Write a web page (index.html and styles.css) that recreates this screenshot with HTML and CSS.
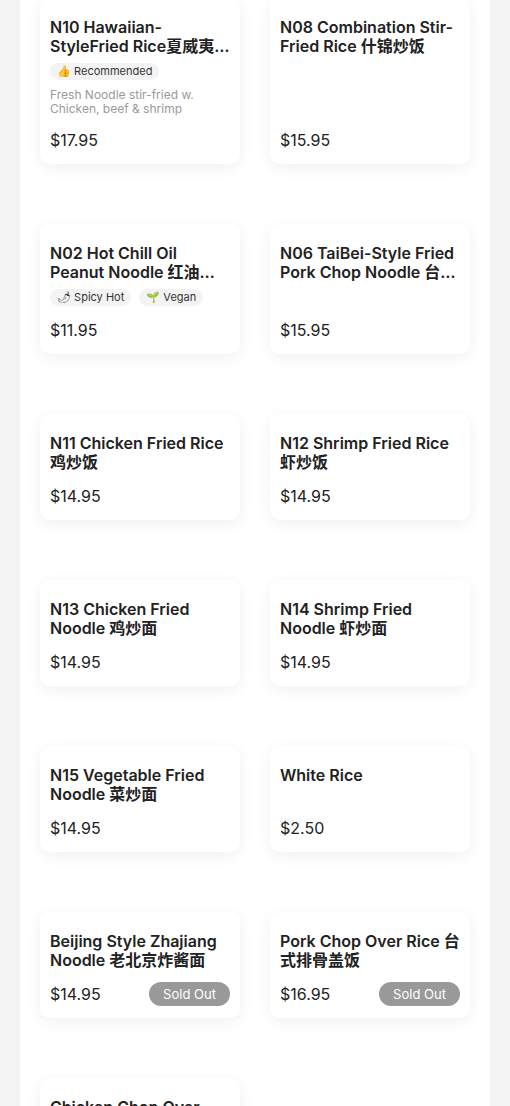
FILE: index.html
```html
<!DOCTYPE html>
<html lang="zh">

<head>
    <meta charset="UTF-8">
    <meta name="viewport" content="width=device-width, initial-scale=1.0">
    <title>Menu</title>
    <link rel="stylesheet" href="styles.css">
</head>

<body>
    <main class="page">
        <div class="menu">
            <div class="card">
                <h3 class="name">N10 Hawaiian-StyleFried Rice夏威夷炒饭</h3>
                <div class="tags">
                    <span class="tag">👍 Recommended</span>
                </div>
                <p class="desc">Fresh Noodle stir-fried w. Chicken, beef &amp; shrimp</p>
                <div class="bottom">
                    <span class="price">$17.95</span>
                </div>
            </div>
            <div class="card">
                <h3 class="name">N08 Combination Stir-Fried Rice 什锦炒饭</h3>
                <div class="bottom">
                    <span class="price">$15.95</span>
                </div>
            </div>

            <div class="card">
                <h3 class="name">N02 Hot Chill Oil Peanut Noodle 红油拌面</h3>
                <div class="tags">
                    <span class="tag">🌶 Spicy Hot</span>
                    <span class="tag">🌱 Vegan</span>
                </div>
                <div class="bottom">
                    <span class="price">$11.95</span>
                </div>
            </div>
            <div class="card">
                <h3 class="name">N06 TaiBei-Style Fried Pork Chop Noodle 台式排骨面</h3>
                <div class="bottom">
                    <span class="price">$15.95</span>
                </div>
            </div>

            <div class="card">
                <h3 class="name">N11 Chicken Fried Rice 鸡炒饭</h3>
                <div class="bottom">
                    <span class="price">$14.95</span>
                </div>
            </div>
            <div class="card">
                <h3 class="name">N12 Shrimp Fried Rice 虾炒饭</h3>
                <div class="bottom">
                    <span class="price">$14.95</span>
                </div>
            </div>

            <div class="card">
                <h3 class="name">N13 Chicken Fried Noodle 鸡炒面</h3>
                <div class="bottom">
                    <span class="price">$14.95</span>
                </div>
            </div>
            <div class="card">
                <h3 class="name">N14 Shrimp Fried Noodle 虾炒面</h3>
                <div class="bottom">
                    <span class="price">$14.95</span>
                </div>
            </div>

            <div class="card">
                <h3 class="name">N15 Vegetable Fried Noodle 菜炒面</h3>
                <div class="bottom">
                    <span class="price">$14.95</span>
                </div>
            </div>
            <div class="card">
                <h3 class="name">White Rice</h3>
                <div class="bottom">
                    <span class="price">$2.50</span>
                </div>
            </div>

            <div class="card">
                <h3 class="name">Beijing Style Zhajiang Noodle 老北京炸酱面</h3>
                <div class="bottom">
                    <span class="price">$14.95</span>
                    <span class="sold">Sold Out</span>
                </div>
            </div>
            <div class="card">
                <h3 class="name">Pork Chop Over Rice 台式排骨盖饭</h3>
                <div class="bottom">
                    <span class="price">$16.95</span>
                    <span class="sold">Sold Out</span>
                </div>
            </div>

            <div class="card">
                <h3 class="name">Chicken Chop Over Rice 台式鸡排盖饭</h3>
                <div class="bottom">
                    <span class="price">$15.95</span>
                </div>
            </div>
        </div>
    </main>
</body>

</html>
```

FILE: styles.css
```css
body {
    font-family: Inter, "Noto Sans CJK SC", sans-serif;
    background-color: #f4f4f4;
    color: #222222;
    margin: 0;
}

.page {
    width: 430px;
    min-height: 100vh;
    margin: 0 auto;
    padding: 0 20px;
    background-color: #ffffff;
}

.menu {
    display: grid;
    grid-template-columns: 200px 200px;
    column-gap: 30px;
    row-gap: 60px;
    margin-top: -2px;
}

.card {
    display: flex;
    flex-direction: column;
    background-color: #ffffff;
    border-radius: 10px;
    box-shadow: 0 4px 16px rgba(0, 0, 0, 0.06);
    padding: 20px 10px 12px;
}

.name {
    margin: 0;
    font-size: 16px;
    font-weight: 600;
    line-height: 19px;
    display: -webkit-box;
    -webkit-line-clamp: 2;
    -webkit-box-orient: vertical;
    overflow: hidden;
}

.tags {
    display: flex;
    gap: 8px;
    margin-top: 7px;
}

.tag {
    background-color: #f3f3f3;
    border-radius: 9px;
    padding: 0 7px;
    font-size: 11px;
    line-height: 17px;
    color: #333333;
}

.desc {
    margin: 8px 0 0;
    font-size: 12px;
    line-height: 14px;
    color: #9a9a9a;
}

.bottom {
    display: flex;
    justify-content: space-between;
    align-items: center;
    margin-top: auto;
    padding-top: 12px;
    height: 24px;
}

.price {
    font-size: 16px;
}

.sold {
    background-color: #999999;
    color: #ffffff;
    font-size: 13px;
    line-height: 24px;
    width: 81px;
    text-align: center;
    border-radius: 12px;
}
```
